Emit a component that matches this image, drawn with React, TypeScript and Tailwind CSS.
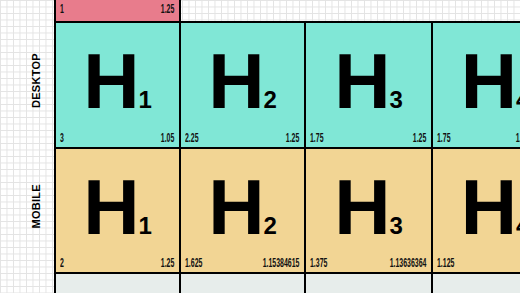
import React from "react";

type Cell = { n: string; left: string; right: string };

const colWidths = [125, 125, 127, 126];

const desktop: Cell[] = [
  { n: "1", left: "3", right: "1.05" },
  { n: "2", left: "2.25", right: "1.25" },
  { n: "3", left: "1.75", right: "1.25" },
  { n: "4", left: "1.75", right: "1.21428571" },
];

const mobile: Cell[] = [
  { n: "1", left: "2", right: "1.25" },
  { n: "2", left: "1.625", right: "1.15384615" },
  { n: "3", left: "1.375", right: "1.13636364" },
  { n: "4", left: "1.125", right: "1.25" },
];

const numFont = { fontFamily: '"Liberation Sans Narrow", "Liberation Sans", sans-serif' };

function Nums({ left, right, pb }: { left: string; right: string; pb: string }) {
  return (
    <div className={`mt-auto flex justify-between pl-[4px] pr-[5px] text-[12px] leading-none font-bold text-[#111] ${pb}`} style={numFont}>
      <span className="inline-block origin-left scale-x-[0.58]">{left}</span>
      <span className="inline-block origin-right scale-x-[0.58]">{right}</span>
    </div>
  );
}

function HeadingCell({ cell, width, bg }: { cell: Cell; width: number; bg: string }) {
  return (
    <div
      className={`flex flex-col shrink-0 h-full border-r-2 border-b-2 border-black ${bg}`}
      style={{ width }}
    >
      <div className="flex justify-center items-baseline pt-[19px] leading-none text-black font-['Liberation_Sans',sans-serif] font-bold">
        <span className="text-[78px]">H</span>
        <span className="text-[24px] -ml-[1px]">{cell.n}</span>
      </div>
      <Nums left={cell.left} right={cell.right} pb="pb-[3px]" />
    </div>
  );
}

function Label({ text }: { text: string }) {
  return (
    <div className="w-[54px] shrink-0 h-full flex items-center justify-end pr-[12px] pb-[10px]">
      <span className="[writing-mode:vertical-rl] rotate-180 text-[11px] leading-none font-bold tracking-[0.3px] text-black font-['Liberation_Sans',sans-serif]">
        {text}
      </span>
    </div>
  );
}

export default function App() {
  return (
    <div className="w-[520px] h-[293px] overflow-hidden bg-white bg-[linear-gradient(to_right,#e3e3e3_1px,transparent_1px),linear-gradient(to_bottom,#e3e3e3_1px,transparent_1px)] bg-[size:6.5px_6.5px]">
      <div className="-mt-[102px] flex flex-col w-max">
        {/* top row, mostly cut off */}
        <div className="flex h-[125px]">
          <div className="w-[54px] shrink-0" />
          <div className="flex border-l-2 border-black h-full">
            <div
              className="flex flex-col shrink-0 h-full border-r-2 border-b-2 border-black bg-[#e87c8c]"
              style={{ width: colWidths[0] }}
            >
              <Nums left="1" right="1.25" pb="pb-[6px]" />
            </div>
            {colWidths.slice(1).map((w, i) => (
              <div key={i} className="shrink-0 h-full border-b-2 border-black" style={{ width: w }} />
            ))}
          </div>
        </div>

        {/* desktop */}
        <div className="flex h-[126px]">
          <Label text="DESKTOP" />
          <div className="flex border-l-2 border-black h-full">
            {desktop.map((c, i) => (
              <HeadingCell key={i} cell={c} width={colWidths[i]} bg="bg-[#80e7d6]" />
            ))}
          </div>
        </div>

        {/* mobile */}
        <div className="flex h-[125px]">
          <Label text="MOBILE" />
          <div className="flex border-l-2 border-black h-full">
            {mobile.map((c, i) => (
              <HeadingCell key={i} cell={c} width={colWidths[i]} bg="bg-[#f2d594]" />
            ))}
          </div>
        </div>

        {/* next row, cut off */}
        <div className="flex h-[125px]">
          <div className="w-[54px] shrink-0" />
          <div className="flex border-l-2 border-black h-full">
            {colWidths.map((w, i) => (
              <div key={i} className="shrink-0 h-full border-r-2 border-black bg-[#e7edeb]" style={{ width: w }} />
            ))}
          </div>
        </div>
      </div>
    </div>
  );
}
